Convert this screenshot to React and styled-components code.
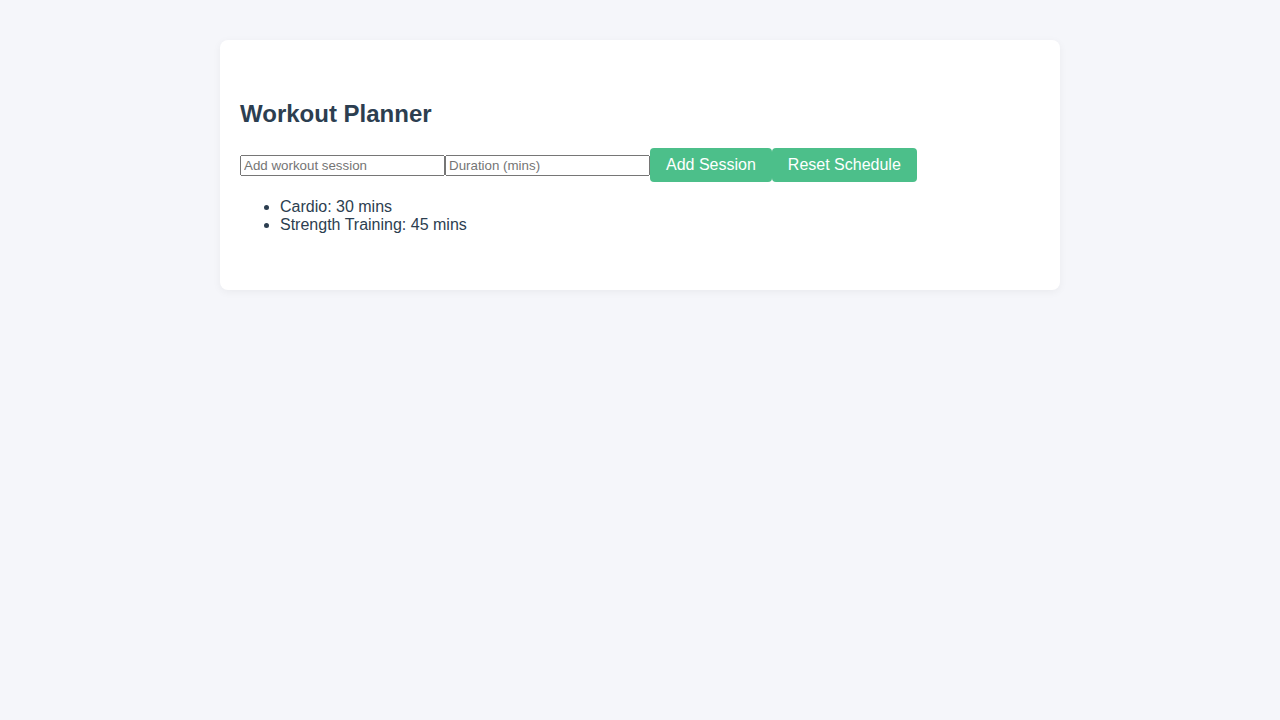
import React, { useState } from "react";
import styled, { createGlobalStyle } from "styled-components";

const GlobalStyle = createGlobalStyle`
  body {
    margin: 0;
    background-color: #f5f6fa;
    font-family: "Liberation Sans", Arial, sans-serif;
    color: #2c3e50;
  }
`;

const Page = styled.div`
  padding-top: 40px;
  min-height: 100vh;
  box-sizing: border-box;
`;

const Card = styled.div`
  width: 840px;
  margin: 0 auto;
  padding: 40px 20px;
  box-sizing: border-box;
  background-color: #ffffff;
  border-radius: 8px;
  box-shadow: 0 2px 8px rgba(0, 0, 0, 0.05);
`;

const Title = styled.h2`
  font-size: 24px;
  font-weight: bold;
  margin: 0 0 20px;
  padding-top: 20px;
`;

const Row = styled.div`
  display: flex;
  align-items: center;
`;

const Field = styled.input`
  width: 205px;
  box-sizing: border-box;
  font-family: "Liberation Sans", Arial, sans-serif;
  font-size: 13.333px;
`;

const Button = styled.button`
  background-color: #4cbf8a;
  color: #ffffff;
  border: none;
  border-radius: 4px;
  padding: 8px 16px;
  font-family: "Liberation Sans", Arial, sans-serif;
  font-size: 16px;
  line-height: 18px;
  cursor: pointer;
`;

const List = styled.ul`
  margin: 16px 0;
  padding-left: 40px;
  font-size: 16px;
  line-height: 18px;
`;

const initial = [
  { name: "Cardio", mins: 30 },
  { name: "Strength Training", mins: 45 },
];

export default function App() {
  const [sessions, setSessions] = useState(initial);
  const [name, setName] = useState("");
  const [mins, setMins] = useState("");

  const add = () => {
    if (!name || !mins) return;
    setSessions([...sessions, { name, mins }]);
    setName("");
    setMins("");
  };

  return (
    <Page>
      <GlobalStyle />
      <Card>
        <Title>Workout Planner</Title>
        <Row>
          <Field
            placeholder="Add workout session"
            value={name}
            onChange={(e) => setName(e.target.value)}
          />
          <Field
            placeholder="Duration (mins)"
            value={mins}
            onChange={(e) => setMins(e.target.value)}
          />
          <Button onClick={add}>Add Session</Button>
          <Button onClick={() => setSessions(initial)}>Reset Schedule</Button>
        </Row>
        <List>
          {sessions.map((s, i) => (
            <li key={i}>
              {s.name}: {s.mins} mins
            </li>
          ))}
        </List>
      </Card>
    </Page>
  );
}
